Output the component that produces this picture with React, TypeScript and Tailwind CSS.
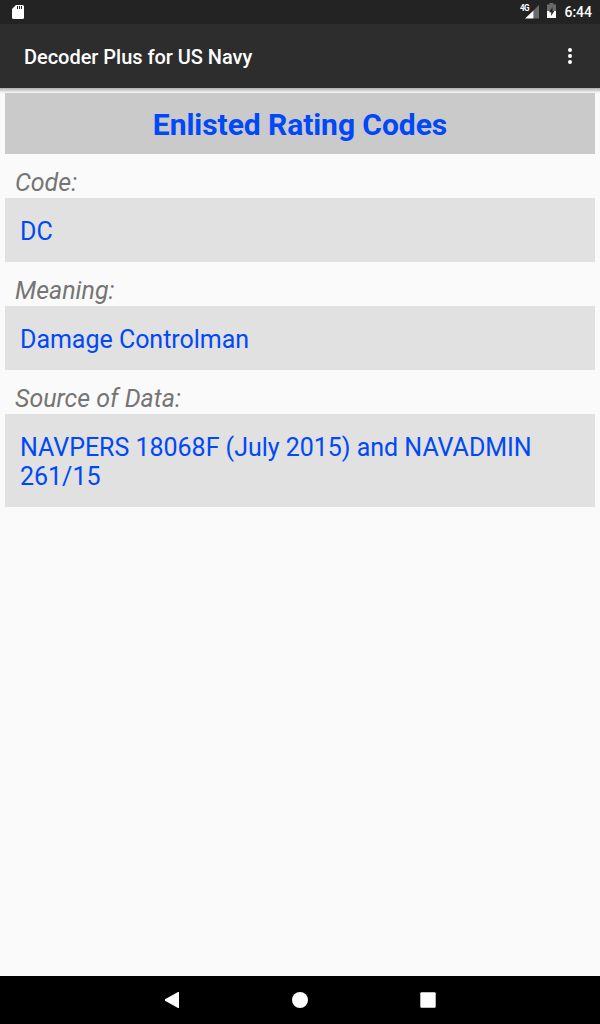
const fields = [
  { label: 'Code:', value: ['DC'] },
  { label: 'Meaning:', value: ['Damage Controlman'] },
  { label: 'Source of Data:', value: ['NAVPERS 18068F (July 2015) and NAVADMIN', '261/15'] },
];

function StatusBar() {
  return (
    <div className="flex h-6 shrink-0 items-center bg-[#232323] text-white">
      <svg className="ml-3" width="12" height="24" viewBox="0 0 12 24">
        <path d="M4 5h6.500a1.500 1.500 0 0 1 1.500 1.500v11a1.500 1.500 0 0 1-1.500 1.500h-9A1.500 1.500 0 0 1 0 17.500V9z" fill="#fff" />
        <path d="M5.500 6v3M7.500 6v3M9.500 6v3" stroke="#232323" strokeWidth="1" />
      </svg>
      <div className="grow" />
      <span className="-mr-1 mb-2 w-[9px] origin-left scale-x-90 text-[9px] leading-none font-bold tracking-[-0.8px]">4G</span>
      <svg width="14" height="24" viewBox="0 0 14 24">
        <path d="M14 5v13.500H8.500V10.500z" fill="#6b6b6b" />
        <path d="M8.500 10.500v8H0z" fill="#fff" />
      </svg>
      <svg className="ml-2" width="9" height="24" viewBox="0 0 9 24">
        <path d="M2.500 3h4v1.500H9V11H0V4.500h2.500z" fill="#6b6b6b" />
        <path d="M0 11h9v7H0z" fill="#fff" />
        <path d="M5.500 7L2 12.200h2.200V16L7.200 11H5.500z" fill="#232323" />
      </svg>
      <span className="mr-2 ml-2 text-[14px] font-medium">6:44</span>
    </div>
  );
}

export default function App() {
  return (
    <div className="flex h-[1024px] w-[600px] flex-col overflow-hidden bg-[#fafafa] font-['Roboto',sans-serif]">
      <StatusBar />
      <header className="flex h-16 shrink-0 items-center justify-between bg-[#2d2d2d] pr-7 pl-6 text-white">
        <h1 className="pt-0.5 text-[20px] font-medium tracking-[-0.03px]">Decoder Plus for US Navy</h1>
        <svg width="4" height="16" viewBox="0 0 4 16" fill="#fff">
          <circle cx="2" cy="2" r="2" />
          <circle cx="2" cy="8" r="2" />
          <circle cx="2" cy="14" r="2" />
        </svg>
      </header>
      <div className="h-[5px] shrink-0 bg-linear-to-b from-[#b0b0b0] to-[#fafafa]" />
      <main className="grow px-[5px]">
        <h2 className="h-[61px] bg-[#cacaca] text-center text-[30px] leading-[63px] font-bold tracking-[-0.06px] text-[#0048f8]">
          Enlisted Rating Codes
        </h2>
        {fields.map((field) => (
          <section key={field.label}>
            <div className="h-11 pt-[14px] pl-[10px] text-[25px] leading-[29px] text-[#757575] italic">
              {field.label}
            </div>
            <div className="bg-[#e1e1e1] pt-[19px] pb-4 pl-[15px] text-[25px] leading-[29px] tracking-[-0.02px] text-[#0048f8]">
              {field.value.map((line) => (
                <div key={line}>{line}</div>
              ))}
            </div>
          </section>
        ))}
      </main>
      <nav className="flex h-12 shrink-0 items-center justify-center gap-28 bg-black">
        <svg width="16" height="16" viewBox="0 0 16 16"><path d="M15 0v16H14L1 8.700V7.300L14 0z" fill="#fff" /></svg>
        <svg width="16" height="16" viewBox="0 0 16 16"><circle cx="8" cy="8" r="8" fill="#fff" /></svg>
        <svg width="16" height="16" viewBox="0 0 16 16"><rect x=".3" y=".3" width="15.400" height="15.400" rx="1" fill="#fff" /></svg>
      </nav>
    </div>
  );
}
